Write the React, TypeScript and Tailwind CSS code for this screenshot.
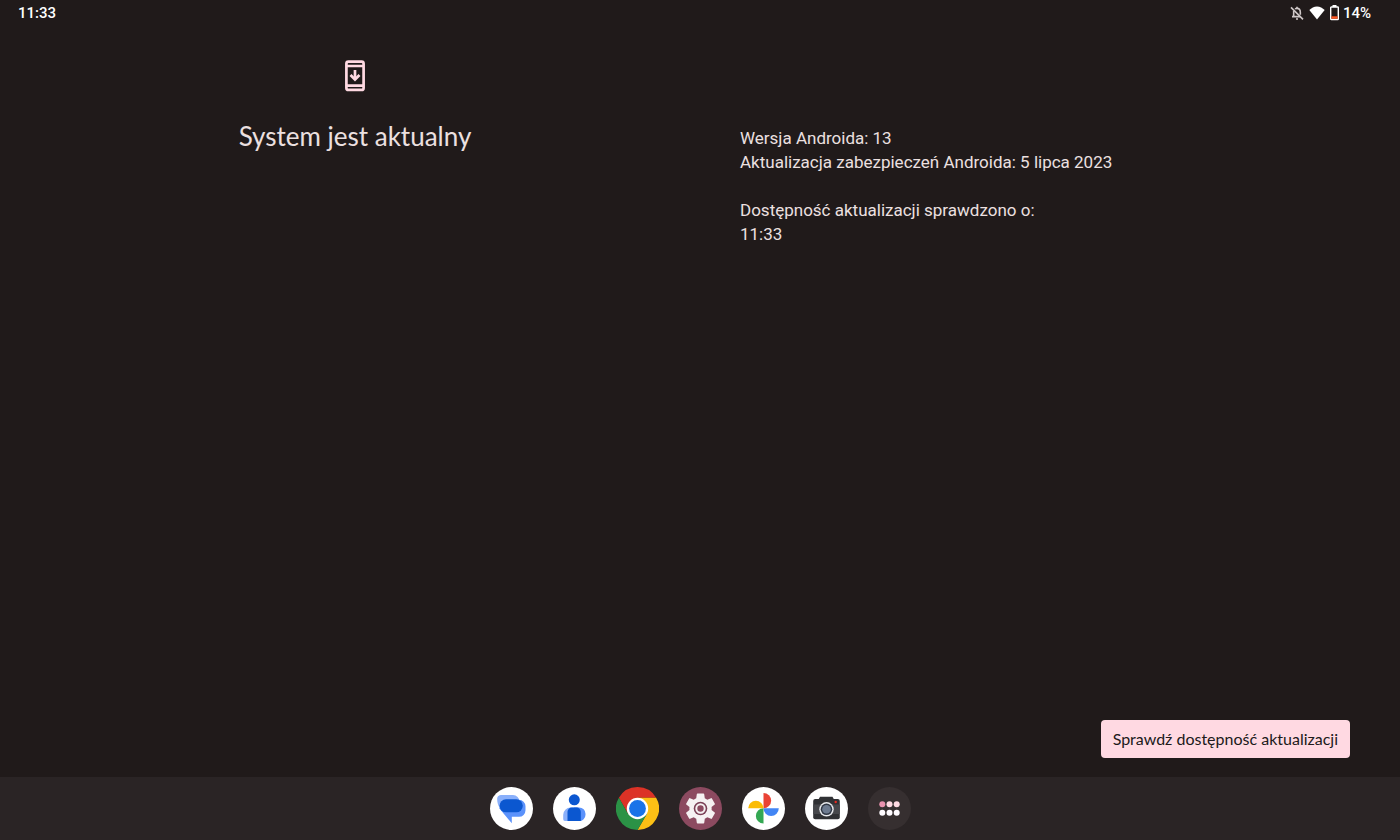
import type { ReactNode } from 'react';

function BellOffIcon() {
  return (
    <svg viewBox="0 0 24 24" className="w-4 h-4 text-[#cfc8c8]" fill="none" stroke="currentColor" strokeWidth="2.400">
      <path d="M3 3.500 21 21.500" />
      <path d="M9 5.800C10 5.200 11 5 12 5c3.300 0 5 2.700 5 6v3.500" />
      <path d="M7 9v8.500h10M4.500 17.500H7" />
      <path d="M12 2.500V5M10.500 21h3" />
    </svg>
  );
}

function WifiIcon() {
  return (
    <svg viewBox="0 0 16 14" className="w-4 h-3.5" fill="white">
      <path d="M8 13.500.3 3.900C2.400 2 5 .4 8 .4s5.600 1.600 7.700 3.500z" />
    </svg>
  );
}

function BatteryIcon() {
  return (
    <svg viewBox="0 0 10 16" className="w-2.5 h-4">
      <path d="M3.500 0h4v2h-4z" fill="white" />
      <rect x="1.700" y="2" width="7.600" height="12.500" rx=".6" fill="none" stroke="white" strokeWidth="1.400" />
      <path d="M2.400 11.300h6.200v2.500H2.400z" fill="#ff5722" />
    </svg>
  );
}

function SystemUpdateIcon() {
  return (
    <svg viewBox="0 0 20 32" className="w-5 h-8" fill="none" stroke="#ffd9e2" strokeWidth="2.700">
      <rect x="1.400" y="1.700" width="17.200" height="28.200" rx="2" />
      <path d="M1 6h18M1 25.600h18" />
      <path d="M10 10v9" />
      <path d="m5.500 15 4.500 4.500 4.500-4.500" />
    </svg>
  );
}

function AppIcon({ children }: { children: ReactNode }) {
  return (
    <svg viewBox="0 0 43 43" className="w-full h-full" aria-hidden="true">
      {children}
    </svg>
  );
}

const apps = [
  {
    name: 'Wiadomości',
    icon: (
      <AppIcon>
        <circle cx="21.500" cy="21.500" r="21.500" fill="white" />
        <path d="M11 8h12a6.500 6.500 0 0 1 6.500 6.500V27H14.500l-5-6.500C8 18.500 7 14 7.200 11.500 7.300 9.500 9 8 11 8z" fill="#8ab0fb" />
        <path d="M27 12.800h2a6.500 6.500 0 0 1 6.500 6.500v4a6.500 6.500 0 0 1-6.500 6.500h-7.200v6.500L9 21z" fill="#5b92fb" />
        <rect x="9.500" y="12.300" width="23.300" height="13" rx="6.500" fill="#0b57d0" />
      </AppIcon>
    ),
  },
  {
    name: 'Kontakty',
    icon: (
      <AppIcon>
        <circle cx="21.500" cy="21.500" r="21.500" fill="white" />
        <circle cx="21.300" cy="12.800" r="5.500" fill="#0b57d0" />
        <path d="M17.500 20.500h8v13.600H12a1.800 1.800 0 0 1-1.800-1.800v-4.500a7.300 7.300 0 0 1 7.300-7.300z" fill="#8ab0fb" />
        <path d="M21 20.500h5.200a6.300 6.300 0 0 1 6.300 6.300v1a6.300 6.300 0 0 1-6.300 6.300H21z" fill="#5b92fb" />
        <path d="M19 20.500h4.500a4.300 4.300 0 0 1 4.300 4.300v9.300h-13.300v-9.300a4.300 4.300 0 0 1 4.500-4.300z" fill="#0b57d0" />
      </AppIcon>
    ),
  },
  {
    name: 'Chrome',
    icon: (
      <AppIcon>
        <path d="M2.880 10.750A21.500 21.500 0 0 1 40.120 10.750H21.500L12.190 26.880z" fill="#dc3226" />
        <path d="M40.120 10.750A21.500 21.500 0 0 1 21.500 43L30.810 26.880 21.500 10.750z" fill="#fcc015" />
        <path d="M21.500 43A21.500 21.500 0 0 1 2.880 10.750L12.190 26.880h18.620z" fill="#2b9246" />
        <circle cx="21.500" cy="21.500" r="10.700" fill="white" />
        <circle cx="21.500" cy="21.500" r="8.400" fill="#1a73e8" />
      </AppIcon>
    ),
  },
  {
    name: 'Ustawienia',
    icon: (
      <AppIcon>
        <circle cx="21.500" cy="21.500" r="21.500" fill="#8c4a60" />
        <path
          transform="translate(2.900 2.900) scale(1.550)"
          d="M19.140 12.940c.04-.3.06-.61.06-.94s-.02-.64-.07-.94l2.030-1.580a.49.49 0 0 0 .12-.61l-1.920-3.320a.49.49 0 0 0-.59-.22l-2.390.96a7 7 0 0 0-1.620-.94l-.36-2.540a.48.48 0 0 0-.48-.41h-3.840a.47.47 0 0 0-.47.41l-.36 2.540c-.59.24-1.130.57-1.620.94l-2.390-.96a.48.48 0 0 0-.59.22L2.740 8.870a.47.47 0 0 0 .12.61l2.030 1.580a6 6 0 0 0 0 1.880l-2.030 1.580a.49.49 0 0 0-.12.61l1.920 3.320c.12.22.37.29.59.22l2.390-.96c.5.38 1.030.7 1.620.94l.36 2.540c.05.24.24.41.48.41h3.840c.24 0 .44-.17.47-.41l.36-2.540a7 7 0 0 0 1.620-.94l2.390.96c.22.08.47 0 .59-.22l1.920-3.320a.47.47 0 0 0-.12-.61z"
          fill="#f5f1f2"
        />
        <circle cx="21.500" cy="21.500" r="6.800" fill="#7a4056" />
        <circle cx="21.500" cy="21.500" r="4.200" fill="#8c4a60" stroke="#f5f1f2" strokeWidth="2" />
      </AppIcon>
    ),
  },
  {
    name: 'Zdjęcia',
    icon: (
      <AppIcon>
        <circle cx="21.500" cy="21.500" r="21.500" fill="white" />
        <path d="M21.500 6a7.650 7.650 0 0 1 0 15.300z" fill="#ea4335" />
        <path d="M36.800 21.300a7.650 7.650 0 0 1-15.300 0z" fill="#4285f4" />
        <path d="M21.500 36.600a7.650 7.650 0 0 1 0-15.300z" fill="#34a853" />
        <path d="M6.200 21.300a7.650 7.650 0 0 1 15.300 0z" fill="#fbbc04" />
      </AppIcon>
    ),
  },
  {
    name: 'Aparat',
    icon: (
      <AppIcon>
        <circle cx="21.500" cy="21.500" r="21.500" fill="white" />
        <path d="m13.500 12.500 1.500-2.800h12.500l1.500 2.800z" fill="#303134" />
        <rect x="8.200" y="12" width="26.600" height="20.300" rx="2" fill="#303134" />
        <path d="M8.200 17.500h26.600v9.500H8.200z" fill="#46474b" />
        <circle cx="21.500" cy="22.300" r="7.200" fill="#e8eaed" />
        <circle cx="21.500" cy="22.300" r="5.800" fill="#303845" />
        <circle cx="21.500" cy="22.300" r="4.300" fill="#6d7b90" />
        <circle cx="30.700" cy="15" r="1.200" fill="#ea2a20" />
      </AppIcon>
    ),
  },
  {
    name: 'Wszystkie aplikacje',
    icon: (
      <AppIcon>
        <circle cx="21.500" cy="21.500" r="21.500" fill="#362f30" />
        <circle cx="14.300" cy="17.300" r="3" fill="#ea92af" />
        <circle cx="21.500" cy="17.300" r="3" fill="#ffd9e2" />
        <circle cx="28.700" cy="17.300" r="3" fill="#ffd9e2" />
        <circle cx="14.300" cy="25.800" r="3" fill="#fffbff" />
        <circle cx="21.500" cy="25.800" r="3" fill="#fffbff" />
        <circle cx="28.700" cy="25.800" r="3" fill="#fffbff" />
      </AppIcon>
    ),
  },
];

export default function App() {
  return (
    <div className="min-h-screen flex flex-col bg-[#201a1a] text-[#ece0e0] font-[Roboto,sans-serif]">
      <header className="flex items-center justify-between h-[26px] pl-[18px] pr-[29px] text-[15px] leading-5 font-medium text-white">
        <time>11:33</time>
        <div className="flex items-center gap-1">
          <BellOffIcon />
          <div className="flex items-center gap-1">
            <WifiIcon />
            <BatteryIcon />
          </div>
          <span>14%</span>
        </div>
      </header>

      <main className="flex-1 flex flex-col px-[50px]">
        <div className="flex-1 grid grid-cols-2 gap-20 pt-[34px]">
          <section className="flex flex-col items-center gap-7">
            <SystemUpdateIcon />
            <h1 className="font-[Lato,sans-serif] text-[26px] leading-8">System jest aktualny</h1>
          </section>
          <section className="pt-[66px] text-[17px] leading-6">
            <p>Wersja Androida: 13</p>
            <p>Aktualizacja zabezpieczeń Androida: 5 lipca 2023</p>
            <p className="mt-6">Dostępność aktualizacji sprawdzono o:</p>
            <p>11:33</p>
          </section>
        </div>
        <div className="flex justify-end pb-[19px]">
          <button
            type="button"
            className="h-[38px] px-3 rounded bg-[#ffd9e2] text-[#201a1a] font-[Lato,sans-serif] text-base whitespace-nowrap"
          >
            Sprawdź dostępność aktualizacji
          </button>
        </div>
      </main>

      <nav className="flex items-center justify-center gap-5 h-[63px] bg-[#2a2425]">
        {apps.map((app) => (
          <button key={app.name} type="button" aria-label={app.name} className="w-[43px] h-[43px] rounded-full">
            {app.icon}
          </button>
        ))}
      </nav>
    </div>
  );
}
